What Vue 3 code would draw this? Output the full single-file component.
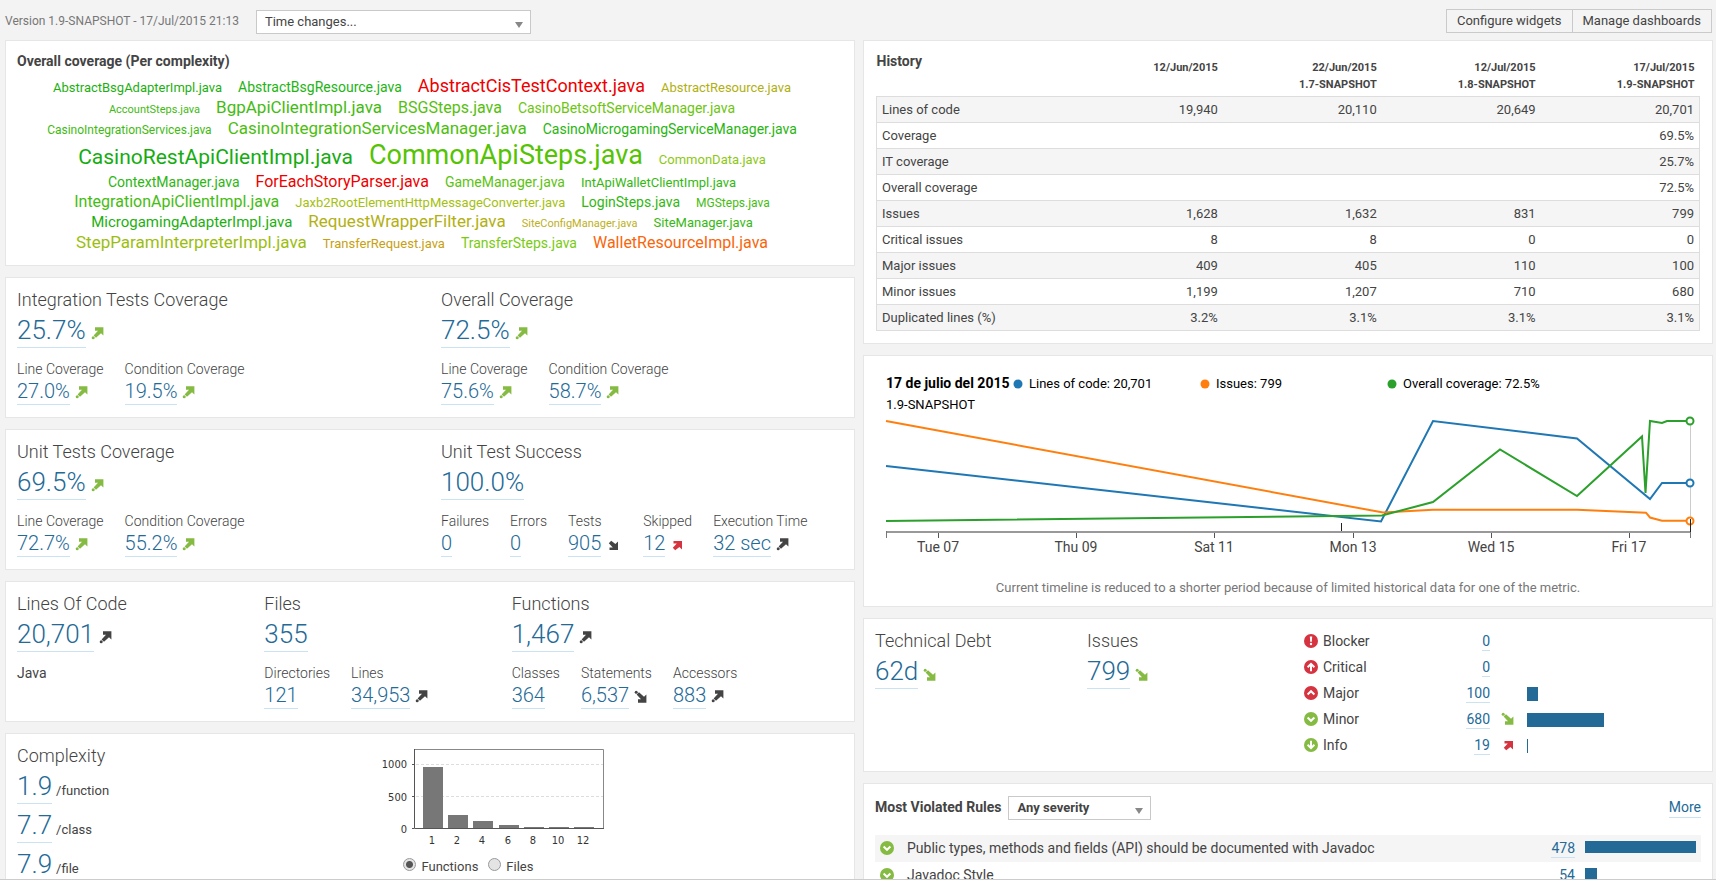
<script setup>
import { ref, h } from 'vue'

const period = ref('')
const severity = ref('')
const distribution = ref('functions')

const files = [
  ['AbstractBsgAdapterImpl', 13, '#1cb00f'], ['AbstractBsgResource', 14, '#22b412'],
  ['AbstractCisTestContext', 18, '#ee0000'], ['AbstractResource', 13, '#b0b012'],
  ['AccountSteps', 11, '#3fba12'], ['BgpApiClientImpl', 17, '#44bb12'],
  ['BSGSteps', 16, '#55c010'], ['CasinoBetsoftServiceManager', 14, '#6cc510'],
  ['CasinoIntegrationServices', 12, '#41ba12'], ['CasinoIntegrationServicesManager', 17, '#4cbe10'],
  ['CasinoMicrogamingServiceManager', 14, '#28b510'], ['CasinoRestApiClientImpl', 21, '#15ac12'],
  ['CommonApiSteps', 27, '#55c303'], ['CommonData', 13, '#8cc814'],
  ['ContextManager', 14, '#2cb612'], ['ForEachStoryParser', 16, '#ee0000'],
  ['GameManager', 14, '#5bc310'], ['IntApiWalletClientImpl', 13, '#34b810'],
  ['IntegrationApiClientImpl', 16, '#45bc12'], ['Jaxb2RootElementHttpMessageConverter', 13, '#a5bf12'],
  ['LoginSteps', 14, '#31b710'], ['MGSteps', 12, '#46bc12'],
  ['MicrogamingAdapterImpl', 15, '#1cb00f'], ['RequestWrapperFilter', 17, '#b3b012'],
  ['SiteConfigManager', 11, '#bdb020'], ['SiteManager', 13, '#37b812'],
  ['StepParamInterpreterImpl', 17, '#9cbd10'], ['TransferRequest', 13, '#c8a010'],
  ['TransferSteps', 14, '#79cb10'], ['WalletResourceImpl', 16, '#f9650a']
]

const coverage = [
  {
    cols: 'two',
    groups: [
      { title: 'Integration Tests Coverage', value: '25.7%', trend: 'up good', items: [
        { label: 'Line Coverage', value: '27.0%', trend: 'up good' },
        { label: 'Condition Coverage', value: '19.5%', trend: 'up good' }] },
      { title: 'Overall Coverage', value: '72.5%', trend: 'up good', items: [
        { label: 'Line Coverage', value: '75.6%', trend: 'up good' },
        { label: 'Condition Coverage', value: '58.7%', trend: 'up good' }] }
    ]
  },
  {
    cols: 'two',
    groups: [
      { title: 'Unit Tests Coverage', value: '69.5%', trend: 'up good', items: [
        { label: 'Line Coverage', value: '72.7%', trend: 'up good' },
        { label: 'Condition Coverage', value: '55.2%', trend: 'up good' }] },
      { title: 'Unit Test Success', value: '100.0%', items: [
        { label: 'Failures', value: '0' },
        { label: 'Errors', value: '0' },
        { label: 'Tests', value: '905', trend: 'down flat small' },
        { label: 'Skipped', value: '12', trend: 'up bad small' },
        { label: 'Execution Time', value: '32 sec', trend: 'up flat' }] }
    ]
  },
  {
    cols: 'three',
    groups: [
      { title: 'Lines Of Code', value: '20,701', trend: 'up flat', note: 'Java', items: [] },
      { title: 'Files', value: '355', items: [
        { label: 'Directories', value: '121' },
        { label: 'Lines', value: '34,953', trend: 'up flat' }] },
      { title: 'Functions', value: '1,467', trend: 'up flat', items: [
        { label: 'Classes', value: '364' },
        { label: 'Statements', value: '6,537', trend: 'down flat' },
        { label: 'Accessors', value: '883', trend: 'up flat' }] }
    ]
  }
]

const complexity = [['1.9', '/function'], ['7.7', '/class'], ['7.9', '/file']]

const bars = [
  { label: '1', x: 43, y: 23 }, { label: '2', x: 68, y: 71 }, { label: '4', x: 93, y: 77 },
  { label: '6', x: 119, y: 81 }, { label: '8', x: 144, y: 83 }, { label: '10', x: 169, y: 83 },
  { label: '12', x: 194, y: 83 }
]

const versions = [
  ['12/Jun/2015', ''], ['22/Jun/2015', '1.7-SNAPSHOT'],
  ['12/Jul/2015', '1.8-SNAPSHOT'], ['17/Jul/2015', '1.9-SNAPSHOT']
]
const history = [
  ['Lines of code', '19,940', '20,110', '20,649', '20,701'],
  ['Coverage', '', '', '', '69.5%'],
  ['IT coverage', '', '', '', '25.7%'],
  ['Overall coverage', '', '', '', '72.5%'],
  ['Issues', '1,628', '1,632', '831', '799'],
  ['Critical issues', '8', '8', '0', '0'],
  ['Major issues', '409', '405', '110', '100'],
  ['Minor issues', '1,199', '1,207', '710', '680'],
  ['Duplicated lines (%)', '3.2%', '3.1%', '3.1%', '3.1%']
]

const ticks = [
  { x: 63, label: 'Tue 07' }, { x: 201, label: 'Thu 09' }, { x: 339, label: 'Sat 11' },
  { x: 478, label: 'Mon 13' }, { x: 616, label: 'Wed 15' }, { x: 754, label: 'Fri 17' }
]
const series = [
  { color: '#1f77b4', label: 'Lines of code: 20,701', x: 143, end: 116,
    points: '11,99 506,154.5 558,54 702,71.5 775,132 787,116 815,116' },
  { color: '#ff7f0e', label: 'Issues: 799', x: 330, end: 154,
    points: '11,54 508,145.5 558,142.7 702,142.7 771,145.7 775,150.5 787,153.7 815,153.7' },
  { color: '#2ca02c', label: 'Overall coverage: 72.5%', x: 517, end: 54,
    points: '11,154 507,148.5 558,135 625,82.5 702,129 767,69.5 770.5,126 775,54 787,56 792,54 815,54' }
]

const severities = [
  { name: 'Blocker', count: '0' },
  { name: 'Critical', count: '0' },
  { name: 'Major', count: '100', bar: 11 },
  { name: 'Minor', count: '680', bar: 77, trend: 'down good' },
  { name: 'Info', count: '19', bar: 1, trend: 'up bad small' }
]

const rules = [
  { name: 'Public types, methods and fields (API) should be documented with Javadoc', count: '478', bar: 100 },
  { name: 'Javadoc Style', count: '54', bar: 11 }
]

const glyphs = {
  Blocker: ['#d4333f', [h('path', { d: 'M5.8 2.6h2.4l-.4 5.2H6.2z', fill: '#fff' }), h('circle', { cx: 7, cy: 10, r: 1.2, fill: '#fff' })]],
  Critical: ['#d4333f', [h('path', { d: 'M7 11.2V4M3.6 7.2L7 3.8l3.4 3.4' })]],
  Major: ['#d4333f', [h('path', { d: 'M3.6 8.4L7 5.2l3.4 3.2' })]],
  Minor: ['#85bb43', [h('path', { d: 'M3.6 5.6L7 8.8l3.4-3.2' })]],
  Info: ['#85bb43', [h('path', { d: 'M7 2.8V10M3.6 6.8L7 10.2l3.4-3.4' })]]
}
const SeverityIcon = (props) => {
  const [fill, marks] = glyphs[props.name]
  return h('svg', { class: 'severity-icon', viewBox: '0 0 14 14', 'aria-hidden': 'true' }, [
    h('circle', { cx: 7, cy: 7, r: 7, fill }),
    h('g', { fill: 'none', stroke: props.name === 'Blocker' ? 'none' : '#fff', 'stroke-width': 2 }, marks)
  ])
}
SeverityIcon.props = ['name']

const TrendIcon = (props) => {
  const kinds = props.kind.split(' ')
  const down = kinds.includes('down')
  const small = kinds.includes('small')
  const fill = kinds.includes('good') ? '#85bb43' : kinds.includes('bad') ? '#d4333f' : '#444'
  const shapes = small
    ? [h('path', { d: 'M3.5 4H12v8.5l-2.6-2.6L5.2 13.2 2.8 10.8 6.8 6.6H3.5z' })]
    : [h('path', { d: 'M4 1.2h8.4v8.4L10 7.2l-5 4.6-2.4-2.4L7 4.8H4z' }), h('circle', { cx: 2.2, cy: 11.8, r: 1.5 })]
  return h('svg', { class: 'trend-icon', viewBox: '0 0 16 16', fill, 'aria-hidden': 'true' }, [
    h('g', down ? { transform: small ? 'matrix(1 0 0 -1 0 17)' : 'matrix(1 0 0 -1 0 15)' } : {}, shapes)
  ])
}
TrendIcon.props = ['kind']
</script>

<template>
  <div class="page">
    <header class="topbar">
      <label class="version" for="period">Version 1.9-SNAPSHOT - 17/Jul/2015 21:13</label>
      <span class="dropdown period">
        <select id="period" v-model="period">
          <option value="">Time changes...</option>
        </select>
      </span>
      <div class="actions">
        <button type="button">Configure widgets</button>
        <button type="button">Manage dashboards</button>
      </div>
    </header>

    <main class="columns">
      <div class="column">
        <section class="card">
          <h3 class="heading">Overall coverage (Per complexity)</h3>
          <div class="cloud">
            <a v-for="f in files" :key="f[0]" href="#" :style="{ fontSize: f[1] + 'px', color: f[2] }">{{ f[0] }}.java</a>
          </div>
        </section>

        <section v-for="(card, i) in coverage" :key="i" class="card flush" :class="card.cols">
          <div v-for="g in card.groups" :key="g.title" class="cell">
            <h3 class="title">{{ g.title }}</h3>
            <div class="big"><a href="#">{{ g.value }}</a><TrendIcon v-if="g.trend" :kind="g.trend" /></div>
            <p v-if="g.note" class="note">{{ g.note }}</p>
            <div v-else class="items">
              <div v-for="m in g.items" :key="m.label" class="item">
                <div class="item-label">{{ m.label }}</div>
                <div class="small"><a href="#">{{ m.value }}</a><TrendIcon v-if="m.trend" :kind="m.trend" /></div>
              </div>
            </div>
          </div>
        </section>

        <section class="card flush complexity">
          <div class="cell">
            <h3 class="title">Complexity</h3>
            <div v-for="c in complexity" :key="c[1]" class="big per"><a href="#">{{ c[0] }}</a><span>{{ c[1] }}</span></div>
          </div>
          <div class="cell">
            <svg class="bars" viewBox="0 0 230 106" role="img" aria-label="Complexity distribution">
              <path d="M36 20.500H223M36 52.500H223" class="grid" />
              <rect v-for="b in bars" :key="b.label" :x="b.x" :y="b.y" width="20" :height="85 - b.y" class="bar-fill" />
              <path d="M34.500 5.500H223.500V84.500" class="frame" />
              <path d="M34.500 5V84.500H224M32 20.500h2M32 52.500h2M32 84.500h2" class="axis" />
              <text x="27" y="24" text-anchor="end">1000</text>
              <text x="27" y="57" text-anchor="end">500</text>
              <text x="27" y="89" text-anchor="end">0</text>
              <text v-for="b in bars" :key="b.label" :x="b.x + 9" y="100" text-anchor="middle">{{ b.label }}</text>
            </svg>
            <div class="radios">
              <label><input v-model="distribution" type="radio" name="distribution" value="functions" />Functions</label>
              <label><input v-model="distribution" type="radio" name="distribution" value="files" />Files</label>
            </div>
          </div>
        </section>
      </div>

      <div class="column">
        <section class="card">
          <table class="history">
            <thead>
              <tr>
                <th class="heading">History</th>
                <th v-for="v in versions" :key="v[0]" class="date">{{ v[0] }}<br />{{ v[1] }}</th>
              </tr>
            </thead>
            <tbody>
              <tr v-for="row in history" :key="row[0]">
                <td v-for="(c, j) in row" :key="j">{{ c }}</td>
              </tr>
            </tbody>
          </table>
        </section>

        <section class="card timeline">
          <svg viewBox="0 0 826 200" role="img" aria-label="Timeline">
            <text x="11" y="21" class="when">17 de julio del 2015</text>
            <text x="11" y="42">1.9-SNAPSHOT</text>
            <g v-for="s in series" :key="s.label">
              <circle :cx="s.x" cy="17" r="4.500" :fill="s.color" />
              <text :x="s.x + 11" y="21">{{ s.label }}</text>
              <polyline :points="s.points" :stroke="s.color" />
            </g>
            <path d="M815.500 54V152" stroke="#ccc" />
            <path d="M11 165H816" stroke="#999" stroke-width="2" />
            <path d="M11.500 164v7M815.500 164v7" stroke="#777" />
            <path v-for="t in ticks" :key="t.x" :d="`M${t.x}.5 166v5`" stroke="#555" />
            <text v-for="t in ticks" :key="t.label" :x="t.x" y="185" class="tick">{{ t.label }}</text>
            <circle v-for="s in series" :key="s.color" cx="815" :cy="s.end" r="3.500" fill="#fff" :stroke="s.color" stroke-width="2" />
            <path d="M466.500 156v8M815.500 152v13" stroke="#222" />
          </svg>
          <p>Current timeline is reduced to a shorter period because of limited historical data for one of the metric.</p>
        </section>

        <section class="card flush debt">
          <div class="cell">
            <h3 class="title">Technical Debt</h3>
            <div class="big"><a href="#">62d</a><TrendIcon kind="down good" /></div>
          </div>
          <div class="cell">
            <h3 class="title">Issues</h3>
            <div class="big"><a href="#">799</a><TrendIcon kind="down good" /></div>
          </div>
          <div class="cell">
            <table class="severities">
              <tbody>
                <tr v-for="s in severities" :key="s.name">
                  <th scope="row"><span class="severity"><SeverityIcon :name="s.name" />{{ s.name }}</span></th>
                  <td class="count"><a href="#">{{ s.count }}</a></td>
                  <td class="trend"><TrendIcon v-if="s.trend" :kind="s.trend" /></td>
                  <td><div v-if="s.bar" class="bar" :style="{ width: s.bar + 'px' }"></div></td>
                </tr>
              </tbody>
            </table>
          </div>
        </section>

        <section class="card">
          <div class="rules-head">
            <label class="heading" for="severity">Most Violated Rules</label>
            <span class="dropdown severity-filter">
              <select id="severity" v-model="severity">
                <option value="">Any severity</option>
              </select>
            </span>
            <a href="#" class="more">More</a>
          </div>
          <table class="rules">
            <tbody>
              <tr v-for="r in rules" :key="r.name">
                <td class="rule-icon"><SeverityIcon name="Minor" /></td>
                <td>{{ r.name }}</td>
                <td class="count"><a href="#">{{ r.count }}</a></td>
                <td class="rule-bar"><div class="bar" :style="{ width: r.bar + '%' }"></div></td>
              </tr>
            </tbody>
          </table>
        </section>
      </div>
    </main>
  </div>
</template>

<style>
body { background: #f3f3f3; }
.trend-icon { width: 16px; height: 16px; margin-left: 5px; vertical-align: -3px; }
.severity-icon { display: block; flex: none; width: 14px; height: 14px; }
</style>

<style scoped>
.page {
  box-sizing: border-box;
  height: 100vh;
  overflow: hidden;
  border-bottom: 1px solid #ccc;
  background: #f3f3f3;
  color: #444;
  font-family: Roboto, "Liberation Sans", sans-serif;
  font-size: 13px;
  line-height: 18px;
}
h3, p { margin: 0; }
a { color: #236a97; text-decoration: none; }
table { width: 100%; border-collapse: collapse; table-layout: fixed; }
td, th { padding: 0; text-align: left; vertical-align: top; }

.topbar { display: flex; align-items: flex-start; height: 40px; padding: 0 4px 0 5px; box-sizing: border-box; }
.version { margin-top: 12px; color: #777; font-size: 12px; }
.dropdown { position: relative; height: 24px; }
.dropdown::after {
  content: "";
  position: absolute;
  right: 8px;
  top: 12px;
  border: 4px solid transparent;
  border-top: 6px solid #888;
  border-bottom: 0;
  pointer-events: none;
}
.dropdown select {
  appearance: none;
  display: block;
  box-sizing: border-box;
  width: 100%;
  height: 24px;
  margin: 0;
  padding: 0 8px;
  border: 1px solid #c9c9c9;
  border-radius: 0;
  background: #fff;
  color: #444;
  font: inherit;
}
.period { width: 275px; margin: 10px 0 0 17px; }
.actions { display: flex; margin: 9px 0 0 auto; }
.actions button {
  height: 24px;
  padding: 0 10px;
  border: 1px solid #cacaca;
  border-radius: 0;
  background: #f4f4f4;
  color: #444;
  font: inherit;
}
.actions button + button { margin-left: -1px; }

.columns { display: grid; grid-template-columns: 1fr 1fr; gap: 8px; padding: 0 3px 0 5px; align-items: start; }
.column { display: grid; gap: 11px; min-width: 0; }
.card { padding: 11px 11px 12px; border: 1px solid #e6e6e6; background: #fff; min-width: 0; }
.flush { display: grid; padding: 10px 0 12px; }
.two { grid-template-columns: 1fr 1fr; }
.three { grid-template-columns: 7fr 7fr 10fr; }
.complexity { grid-template-columns: 3fr 4fr; }
.debt { grid-template-columns: 1fr 1fr 2fr; }
.cell { padding: 0 11px; min-width: 0; }

.heading { font-size: 14px; font-weight: 700; line-height: 18px; }
.cloud { padding: 5px 12px 0; text-align: center; line-height: 1.23; }
.cloud a { display: inline-block; margin-right: 16px; }

.title { font-size: 18px; font-weight: 300; line-height: 24px; }
.big { margin-top: 1px; white-space: nowrap; height: 35px; }
.big a { display: inline-block; border-bottom: 1px solid #cae3f2; font-size: 26px; font-weight: 300; line-height: 34px; }
.per { margin-bottom: 4px; }
.per span { margin-left: 4px; }
.note { margin-top: 12px; font-size: 14px; }
.items { display: flex; gap: 21px; margin-top: 12px; }
.item-label { font-size: 14px; font-weight: 300; white-space: nowrap; }
.small { height: 27px; white-space: nowrap; }
.small a { display: inline-block; border-bottom: 1px solid #cae3f2; font-size: 20px; font-weight: 300; line-height: 26px; }

.bars { display: block; width: 230px; height: 106px; }
.bars text { fill: #333; font-family: "DejaVu Sans Condensed", "DejaVu Sans", sans-serif; font-size: 11px; }
.bar-fill { fill: #777; }
.grid { stroke: #ddd; stroke-dasharray: 3 2; }
.frame { fill: none; stroke: #888; }
.axis { fill: none; stroke: #555; }
.radios { display: flex; gap: 10px; margin: 8px 0 0 23px; }
.radios label { display: flex; gap: 5px; }
.radios input {
  appearance: none;
  box-sizing: border-box;
  width: 13px;
  height: 13px;
  margin: 0;
  border: 1px solid #999;
  border-radius: 50%;
  background: #e4e4e4;
}
.radios input:checked { background: radial-gradient(circle, #555 0 3px, #e4e4e4 4px); }

.history { width: calc(100% - 2px); margin: 0 1px; }
.history .date { width: 18.7%; padding: 7px 5px 3px 0; text-align: right; font-size: 11px; line-height: 17px; }
.history tbody { border: 1px solid #ddd; }
.history tbody tr { border-top: 1px solid #ddd; }
.history tbody tr:nth-child(odd) { background: #f5f5f5; }
.history td { padding: 0 5px; text-align: right; line-height: 25px; }
.history td:first-child { text-align: left; }

.timeline { padding-bottom: 9px; }
.timeline svg { display: block; width: 100%; }
.timeline text { fill: #000; font-size: 13px; }
.timeline .when { font-size: 14px; font-weight: 700; }
.timeline .tick { fill: #444; font-size: 14px; text-anchor: middle; }
.timeline polyline { fill: none; stroke-width: 2; }
.timeline p { margin-top: 12px; color: #777; text-align: center; }

.severities { font-size: 14px; line-height: 25px; }
.severities tr { height: 26px; }
.severities th { width: 130px; font-weight: 400; }
.severity { display: flex; gap: 5px; padding-left: 5px; }
.severity svg { margin-top: 5px; }
.severities .count { width: 61px; }
.severities .trend { width: 37px; padding-left: 6px; box-sizing: border-box; }
.severities .bar { height: 14px; margin-top: 6px; }
.count { text-align: right; }
.count a, .more { padding-bottom: 1px; border-bottom: 1px solid #cae3f2; }
.bar { background: #236a97; }

.rules-head { display: flex; align-items: flex-start; height: 40px; }
.rules-head .heading { margin-top: 3px; }
.severity-filter { width: 143px; margin: 1px 0 0 7px; font-weight: 700; }
.more { margin: 3px 0 0 auto; font-size: 14px; line-height: 18px; }
.rules { font-size: 14px; line-height: 27px; }
.rules tr:nth-child(odd) { background: #f5f5f5; }
.rule-icon { width: 32px; }
.rule-icon svg { margin: 6px 0 0 5px; }
.rules .count { width: 60px; }
.rule-bar { width: 111px; padding: 0 5px 0 10px; }
.rules .bar { height: 12px; margin-top: 6px; }
</style>
